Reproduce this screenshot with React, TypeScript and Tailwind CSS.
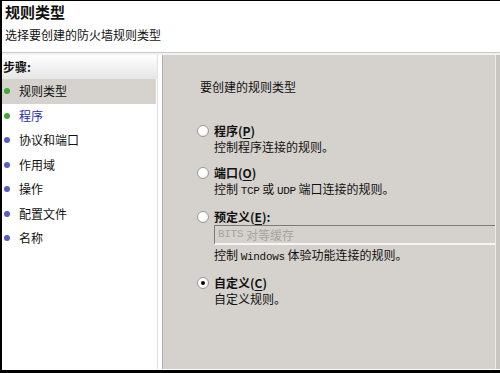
import React from "react";

const font = { fontFamily: '"Noto Sans CJK SC", "Noto Sans", sans-serif' };

function M({ children }: { children: React.ReactNode }) {
  return <span className="text-[11px] tracking-[-0.3px]" style={{ fontFamily: '"Liberation Mono", monospace' }}>{children}</span>;
}

function Radio({ checked }: { checked?: boolean }) {
  return (
    <div className="w-[12px] h-[12px] rounded-full border border-[#9c9a96] bg-[radial-gradient(circle_at_40%_40%,#ffffff_45%,#dedbd5_100%)] flex items-center justify-center shrink-0">
      {checked && <div className="w-[4px] h-[4px] rounded-full bg-black" />}
    </div>
  );
}

function Option({ label, acc, tail, desc, checked, children }: { label: string; acc: string; tail?: string; desc: React.ReactNode; checked?: boolean; children?: React.ReactNode }) {
  return (
    <div className="flex flex-col">
      <div className="flex items-center h-[16px]">
        <Radio checked={checked} />
        <span className="ml-[5px] text-[12px] leading-[16px] font-bold text-[#111]">
          {label}(<span className="underline underline-offset-2">{acc}</span>){tail}
        </span>
      </div>
      <div className="pl-[17px]">
        {children}
        <div className="text-[12px] leading-[16px] text-[#111]">{desc}</div>
      </div>
    </div>
  );
}

const steps = [
  { t: "规则类型", c: "green", sel: true },
  { t: "程序", c: "green", blue: true },
  { t: "协议和端口", c: "blue" },
  { t: "作用域", c: "blue" },
  { t: "操作", c: "blue" },
  { t: "配置文件", c: "blue" },
  { t: "名称", c: "blue" },
];

export default function App() {
  return (
    <div className="w-[500px] h-[373px] bg-black pl-[2px] pt-[1px] pb-[3px] flex flex-col overflow-hidden" style={font}>
      <div className="bg-white h-[52px] shrink-0 pl-[3px] border-b border-[#c9c9c9] flex flex-col">
        <div className="text-[15px] leading-[18px] font-bold text-[#111] mt-[2px]">规则类型</div>
        <div className="text-[12px] leading-[14px] text-[#111] mt-[7px]">选择要创建的防火墙规则类型</div>
      </div>
      <div className="h-[2px] bg-[#f2f2f2] shrink-0" />
      <div className="flex flex-1 min-h-0 border-b border-white">
        <div className="w-[156px] bg-white border-r border-[#e2e2e2] flex flex-col shrink-0">
          <div className="h-[24px] flex items-center pl-[1px] text-[12px] font-bold text-[#111] bg-gradient-to-b from-white to-[#e6e6e6]">步骤:</div>
          {steps.map((s) => (
            <div key={s.t} className={`h-[24.5px] flex items-center pl-[2px] ${s.sel ? "bg-[#d6d3ce] mr-[1px]" : ""}`}>
              <div className={`w-[6px] h-[6px] rounded-full ${s.c === "green" ? "bg-[#43a834]" : "bg-[#5b5bc4]"}`} />
              <span className={`ml-[9px] text-[12px] leading-[14px] ${s.blue ? "text-[#1f2bb0]" : "text-[#111]"}`}>{s.t}</span>
            </div>
          ))}
        </div>
        <div className="w-[4px] bg-white shrink-0" />
        <div className="flex-1 bg-[#d5d2cd] border-l border-[#b3afa9] overflow-hidden pl-[34px] pt-[25px] flex flex-col">
          <div className="text-[12px] leading-[14px] text-[#111] ml-[3px]">要创建的规则类型</div>
          <div className="mt-[29px] flex flex-col gap-[10px]">
            <Option label="程序" acc="P" desc="控制程序连接的规则。" />
            <Option label="端口" acc="O" desc={<>控制 <M>TCP</M> 或 <M>UDP</M> 端口连接的规则。</>} />
            <Option label="预定义" acc="E" tail=":" desc={<>控制 <M>Windows</M> 体验功能连接的规则。</>}>
              <div className="w-[300px] h-[20px] border-t border-l border-[#7c7a76] border-b-2 border-b-[#f6f5f2] flex items-center pl-[3px] text-[12px] text-[#a6a39e] mb-[2px]">
                <M>BITS</M>&nbsp;对等缓存
              </div>
            </Option>
            <Option label="自定义" acc="C" desc="自定义规则。" checked />
          </div>
        </div>
        <div className="w-[1px] bg-[#ecebe8] shrink-0" />
        <div className="w-[4px] bg-[#c9c6c1] shrink-0" />
      </div>
    </div>
  );
}
